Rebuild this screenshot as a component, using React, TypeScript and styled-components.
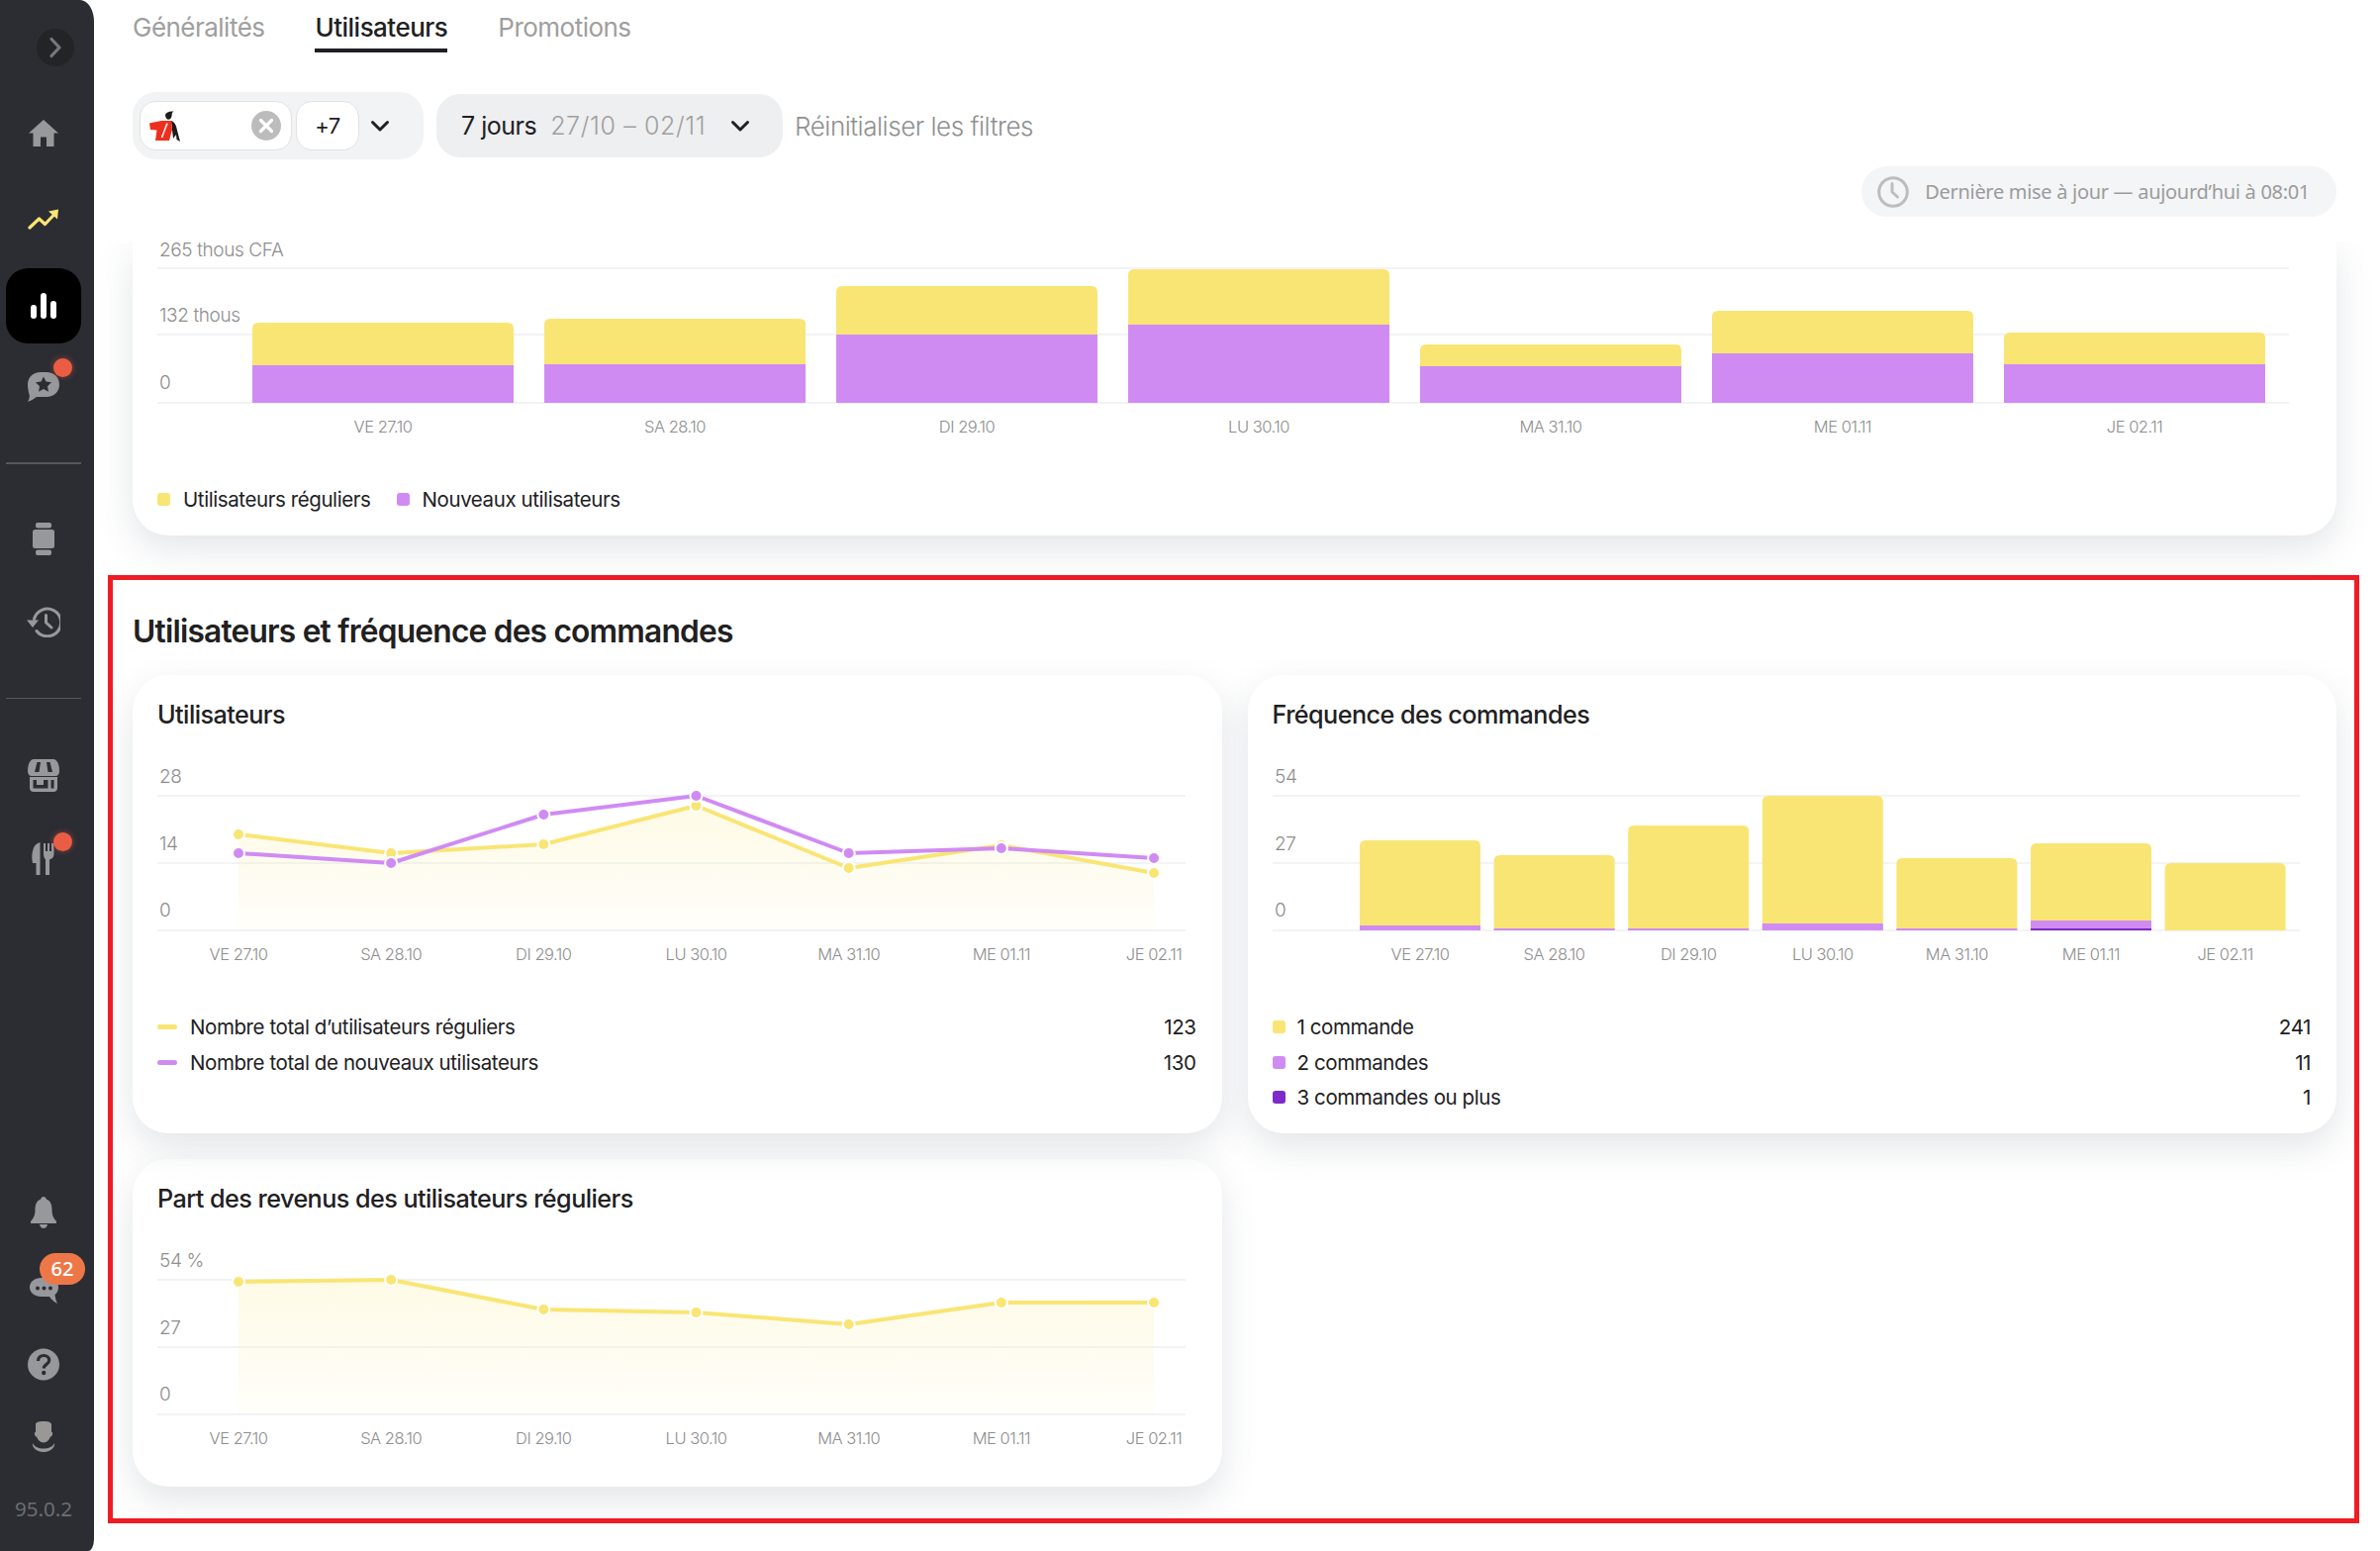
import styled, { createGlobalStyle } from "styled-components";

const GlobalStyle = createGlobalStyle`
  html, body {
    margin: 0;
    padding: 0;
    background: #fff;
  }
  body {
    font-family: "Inter", "Liberation Sans", sans-serif;
    color: #21201f;
  }
  * {
    box-sizing: border-box;
  }
`;

const YELLOW = "#f9e574";
const PURPLE = "#d08bf3";
const DARK_PURPLE = "#7e2ac8";
const ICON = "#97989b";
const SIDE = "#2b2d33";

const days = ["VE 27.10", "SA 28.10", "DI 29.10", "LU 30.10", "MA 31.10", "ME 01.11", "JE 02.11"];

const Page = styled.div`
  display: flex;
  height: 1567px;
  overflow: hidden;
  background: #fff;
`;

const Sidebar = styled.aside`
  flex: 0 0 95px;
  display: flex;
  flex-direction: column;
  background: ${SIDE};
  border-top-right-radius: 14px 22px;
  border-bottom-right-radius: 6px 12px;
`;

const Toggle = styled.div`
  width: 38px;
  height: 38px;
  margin: 29px 0 24px 37px;
  border-radius: 50%;
  background: #222428;
  display: flex;
  align-items: center;
  justify-content: center;
`;

const NavSlot = styled.div<{ $h?: number }>`
  position: relative;
  width: 88px;
  height: ${(p) => p.$h ?? 84}px;
  display: flex;
  align-items: center;
  justify-content: center;
`;

const ActiveItem = styled.div`
  width: 76px;
  height: 76px;
  border-radius: 22px;
  background: #000;
  display: flex;
  align-items: center;
  justify-content: center;
`;

const NavDivider = styled.div<{ $thick?: boolean }>`
  width: 76px;
  height: ${(p) => (p.$thick ? 2 : 1)}px;
  margin: ${(p) => (p.$thick ? "37px 0 33px 6px" : "35px 0 35px 6px")};
  background: #55575c;
  flex: none;
`;

const NavDot = styled.span<{ $top: number }>`
  position: absolute;
  left: 54px;
  top: ${(p) => p.$top}px;
  width: 19px;
  height: 19px;
  border-radius: 50%;
  background: #ea5d44;
  box-shadow: 0 0 6px rgba(234, 93, 68, 0.5);
`;

const CountBadge = styled.span`
  position: absolute;
  left: 40px;
  top: -1px;
  width: 46px;
  height: 32px;
  border-radius: 16px;
  background: #ee7748;
  color: #fff;
  font: 500 20px/32px "Noto Sans", sans-serif;
  text-align: center;
`;

const BottomNav = styled.div`
  margin-top: auto;
  display: flex;
  flex-direction: column;
`;

const Version = styled.div`
  width: 88px;
  margin-top: 24px;
  padding-bottom: 31px;
  font: 400 20.5px/24px "Noto Sans", sans-serif;
  color: #6c6e72;
  text-align: center;
`;

const Main = styled.main`
  flex: 1;
  min-width: 0;
  display: flex;
  flex-direction: column;
`;

const Header = styled.header`
  position: relative;
  z-index: 2;
  flex: none;
  height: 244px;
  padding: 12px 44px 0 39px;
  background: #fff;
  display: flex;
  flex-direction: column;
`;

const Tabs = styled.nav`
  display: flex;
  gap: 51px;
`;

const Tab = styled.div<{ $active?: boolean }>`
  font-size: 26px;
  line-height: 32px;
  font-weight: ${(p) => (p.$active ? 500 : 400)};
  letter-spacing: -0.02em;
  padding-bottom: 5px;
  border-bottom: 4px solid ${(p) => (p.$active ? "#1f2023" : "transparent")};
  color: ${(p) => (p.$active ? "#21201f" : "#9e9e9e")};
`;

const Filters = styled.div`
  margin-top: 40px;
  display: flex;
  align-items: center;
`;

const PlaceBox = styled.div`
  width: 294px;
  height: 68px;
  padding: 9px 0 9px 7px;
  border-radius: 24px;
  background: #f2f3f5;
  display: flex;
  align-items: center;
  gap: 4px;
`;

const Chip = styled.div<{ $w: number }>`
  width: ${(p) => p.$w}px;
  height: 50px;
  border: 1px solid #e2e2e2;
  border-radius: 16px;
  background: #fff;
  display: flex;
  align-items: center;
  justify-content: space-between;
  padding: 0 10px 0 9px;
`;

const MoreChip = styled(Chip)`
  justify-content: center;
  padding: 0;
  font-size: 22px;
  letter-spacing: -0.02em;
`;

const ChevronSlot = styled.div`
  margin-left: 7px;
  display: flex;
`;

const DateBox = styled.div`
  width: 350px;
  height: 64px;
  margin: 0 12px 0 13px;
  padding-left: 25px;
  border-radius: 24px;
  background: #eeeff1;
  display: flex;
  align-items: center;
  font-size: 25px;
  letter-spacing: -0.02em;
`;

const DateRange = styled.span`
  margin: 0 25px 0 14px;
  color: #a0a0a0;
  font-weight: 300;
  letter-spacing: 0.025em;
`;

const ResetLink = styled.div`
  font-size: 26px;
  letter-spacing: -0.018em;
  font-weight: 300;
  color: #8f8f8f;
`;

const UpdatedPill = styled.div`
  align-self: flex-end;
  margin-top: 7px;
  height: 51px;
  padding: 0 27px 0 16px;
  border-radius: 26px;
  background: #f4f5f7;
  display: flex;
  align-items: center;
  gap: 16px;
  font: 400 20px "Noto Sans", sans-serif;
  letter-spacing: -0.015em;
  color: #9b9b9b;
`;

const Content = styled.div`
  flex: 1;
  display: flex;
  flex-direction: column;
`;

const Card = styled.section<{ $raised?: boolean }>`
  position: relative;
  z-index: ${(p) => (p.$raised ? 1 : 0)};
  background: #fff;
  border-radius: 36px;
  box-shadow: 0 14px 36px rgba(70, 80, 100, 0.15);
`;

const TopCard = styled(Card)`
  margin: 0 44px 0 39px;
  padding: 0 48px 21px 25px;
  border-top-left-radius: 0;
  border-top-right-radius: 0;
`;

const FrameSection = styled.section`
  margin: 40px 21px 0 14px;
  padding: 32px 18px 32px 20px;
  border: 5px solid #ee1c25;
  overflow: hidden;
`;

const SectionTitle = styled.h2`
  margin: 0 0 24px;
  font-size: 31.7px;
  line-height: 40px;
  font-weight: 600;
  letter-spacing: -0.025em;
`;

const CardsGrid = styled.div`
  display: grid;
  grid-template-columns: 1fr 1fr;
  gap: 26px;
`;

const ChartCard = styled(Card)<{ $bottom: number }>`
  padding: 24px 26px ${(p) => p.$bottom}px 25px;
`;

const CardTitle = styled.h3`
  margin: 0 0 32px;
  font-size: 25.2px;
  line-height: 32px;
  font-weight: 500;
  letter-spacing: -0.022em;
`;

const ChartCanvas = styled.svg`
  display: block;
  overflow: visible;
`;

const AxisText = styled.text`
  font-size: 19px;
  font-weight: 300;
  letter-spacing: -0.02em;
  fill: #8e8e8e;
  dominant-baseline: central;
`;

const DayText = styled.text`
  font-size: 16.5px;
  font-weight: 300;
  letter-spacing: -0.03em;
  fill: #8e8e8e;
  text-anchor: middle;
  dominant-baseline: central;
`;

const Legend = styled.div`
  margin-top: 45px;
  display: flex;
  flex-direction: column;
`;

const LegendRow = styled.div`
  height: 35.5px;
  display: flex;
  align-items: center;
  font-size: 20.5px;
  font-weight: 400;
  letter-spacing: -0.02em;
`;

const LineSwatch = styled.span<{ $color: string }>`
  flex: none;
  width: 20px;
  height: 5px;
  margin-right: 13px;
  border-radius: 3px;
  background: ${(p) => p.$color};
`;

const SquareSwatch = styled.span<{ $color: string }>`
  flex: none;
  width: 13px;
  height: 13px;
  margin-right: 12px;
  border-radius: 3px;
  background: ${(p) => p.$color};
`;

const LegendValue = styled.span`
  margin-left: auto;
`;

const InlineLegend = styled.div`
  margin-top: 44px;
  height: 32px;
  display: flex;
  align-items: center;
  font-size: 20.5px;
  letter-spacing: -0.02em;
`;

const InlineItem = styled.div`
  display: flex;
  align-items: center;
  margin-right: 26px;
`;

const ItemSwatch = styled(SquareSwatch)`
  margin-right: 13px;
`;

type BarColumn = { top: number; color: string }[];

function Grid({ width, lines, ticks }: { width: number; lines: number[]; ticks: { y: number; label: string }[] }) {
  return (
    <>
      {lines.map((y) => (
        <rect key={y} x={0} y={y - 1} width={width} height={2} fill="#f2f3f5" />
      ))}
      {ticks.map((t) => (
        <AxisText key={t.label} x={2} y={t.y}>
          {t.label}
        </AxisText>
      ))}
    </>
  );
}

function BarChart(props: {
  width: number;
  height: number;
  lines: number[];
  ticks: { y: number; label: string }[];
  startX: number;
  step: number;
  barWidth: number;
  dayY: number;
  columns: BarColumn[];
}) {
  const { width, height, lines, ticks, startX, step, barWidth, dayY, columns } = props;
  const base = lines[2];
  return (
    <ChartCanvas width={width} height={height} viewBox={`0 0 ${width} ${height}`}>
      <Grid width={width} lines={lines} ticks={ticks} />
      {columns.map((col, i) => {
        const x = startX + i * step;
        return (
          <g key={i}>
            {col.map((seg, j) =>
              j === 0 ? (
                <path
                  key={j}
                  fill={seg.color}
                  d={`M${x} ${base}V${seg.top + 6}Q${x} ${seg.top} ${x + 6} ${seg.top}H${x + barWidth - 6}Q${x + barWidth} ${seg.top} ${x + barWidth} ${seg.top + 6}V${base}Z`}
                />
              ) : (
                <rect key={j} x={x} y={seg.top} width={barWidth} height={base - seg.top} fill={seg.color} />
              )
            )}
            <DayText x={x + barWidth / 2} y={dayY}>
              {days[i]}
            </DayText>
          </g>
        );
      })}
    </ChartCanvas>
  );
}

function LineChart(props: {
  id: string;
  ticks: { y: number; label: string }[];
  area: number[];
  series: { color: string; points: number[] }[];
}) {
  const { id, ticks, area, series } = props;
  const width = 1040;
  const lines = [34, 102, 170];
  const xAt = (i: number) => 82 + i * 154.17;
  const areaPath = `M${xAt(0)} 170` + area.map((y, i) => `L${xAt(i)} ${y}`).join("") + `L${xAt(6)} 170Z`;
  return (
    <ChartCanvas width={width} height={205} viewBox={`0 0 ${width} 205`}>
      <defs>
        <linearGradient id={id} x1="0" y1="0" x2="0" y2="1">
          <stop offset="0" stopColor={YELLOW} stopOpacity={0.18} />
          <stop offset="1" stopColor={YELLOW} stopOpacity={0.04} />
        </linearGradient>
      </defs>
      <Grid width={width - 1} lines={lines} ticks={ticks} />
      <path d={areaPath} fill={`url(#${id})`} />
      {series.map((s) => (
        <g key={s.color}>
          <polyline
            points={s.points.map((y, i) => `${xAt(i)},${y}`).join(" ")}
            fill="none"
            stroke={s.color}
            strokeWidth={4}
            strokeLinejoin="round"
          />
          {s.points.map((y, i) => (
            <circle key={i} cx={xAt(i)} cy={y} r={6} fill={s.color} stroke="#fff" strokeWidth={2} />
          ))}
        </g>
      ))}
      {days.map((d, i) => (
        <DayText key={d} x={xAt(i)} y={194}>
          {d}
        </DayText>
      ))}
    </ChartCanvas>
  );
}

const ChevronDown = () => (
  <svg width="20" height="13" viewBox="0 0 20 13">
    <path d="M2.5 2.5 10 10l7.5-7.5" fill="none" stroke="#21201f" strokeWidth="3" strokeLinecap="round" strokeLinejoin="round" />
  </svg>
);

const PlaceLogo = () => (
  <svg width="32" height="31" viewBox="0 0 32 31">
    <path d="M16 4c1-2.500 4-4 8.500-3.500C23 1.500 22.700 2.500 22.700 4.300c0 2.600-1.700 4.500-3.500 4.500S16 6.500 16 4Z" fill="#1d1c1c" />
    <path d="M22 10c3.500 1 5 4.500 6 9.500l3 11.500-3.500-2-.5-5-3 4Z" fill="#1d1c1c" />
    <path d="M0 12.500 12 10h10l1 9-3 11H6l1.500-10.500L1 19Z" fill="#ee2f1f" />
    <path d="M18 12.500 12.500 27" fill="none" stroke="#fff" strokeWidth="1.500" />
  </svg>
);

const ClearIcon = () => (
  <svg width="30" height="30" viewBox="0 0 30 30">
    <circle cx="15" cy="15" r="15" fill="#bcbcbc" />
    <path d="m9.500 9.500 11 11m0-11-11 11" stroke="#fff" strokeWidth="3.200" strokeLinecap="round" />
  </svg>
);

const ClockIcon = () => (
  <svg width="32" height="32" viewBox="0 0 32 32">
    <circle cx="16" cy="16" r="14.300" fill="none" stroke="#bdbdbd" strokeWidth="3" />
    <path d="M15 7.500V16l5.500 5" fill="none" stroke="#bdbdbd" strokeWidth="3" strokeLinecap="round" strokeLinejoin="round" />
  </svg>
);

const ToggleArrow = () => (
  <svg width="14" height="22" viewBox="0 0 14 22">
    <path d="m3 2.500 8 8.500-8 8.500" fill="none" stroke="#77787b" strokeWidth="3.200" strokeLinecap="round" strokeLinejoin="round" />
  </svg>
);

const HomeIcon = () => (
  <svg width="30" height="27" viewBox="0 0 30 27">
    <path d="M15 0 30 13.500h-4.500V27H18V17.500h-6V27H4.500V13.500H0Z" fill={ICON} />
  </svg>
);

const TrendIcon = () => (
  <svg width="32" height="21" viewBox="0 0 32 21">
    <path d="m2 19 9.500-9 6 5.500L27 5.500" fill="none" stroke={YELLOW} strokeWidth="3.200" strokeLinecap="round" strokeLinejoin="round" />
    <path d="M21 2.500 31 .5 30 10.500Z" fill={YELLOW} />
  </svg>
);

const BarsIcon = () => (
  <svg width="26" height="26" viewBox="0 0 26 26">
    <rect x="0" y="12" width="6" height="14" rx="3" fill="#fff" />
    <rect x="10" y="0" width="6" height="26" rx="3" fill="#fff" />
    <rect x="20" y="8" width="6" height="18" rx="3" fill="#fff" />
  </svg>
);

const ReviewIcon = () => (
  <svg width="32" height="30" viewBox="0 0 32 30">
    <path d="M13 0h6c7.500 0 13 5 13 12.500S26.500 25 19 25H9C6 27 3 29 0 30c1.500-2.500 2-5 1.800-7C.7 20.800 0 15 0 12.500 0 5 5.500 0 13 0Z" fill={ICON} />
    <path d="m16 4.500 2.500 5 5.500.8-4 3.900 1 5.500L16 17.100l-5 2.600 1-5.500-4-3.900 5.500-.8Z" fill={SIDE} />
  </svg>
);

const WatchIcon = () => (
  <svg width="22" height="33" viewBox="0 0 22 33">
    <rect x="3" y="0" width="16" height="5.500" rx="2" fill={ICON} />
    <rect x="0" y="7" width="22" height="19" rx="2.500" fill={ICON} />
    <rect x="3" y="27.500" width="16" height="5.500" rx="2" fill={ICON} />
  </svg>
);

const HistoryIcon = () => (
  <svg width="34" height="31" viewBox="0 0 34 31">
    <path d="M7.500 12.500A13.800 13.800 0 1 1 10 24.500" fill="none" stroke={ICON} strokeWidth="3" strokeLinecap="round" />
    <path d="M0 13.500h12L6 21Z" fill={ICON} />
    <path d="M19.500 8.500V16l5.500 5" fill="none" stroke={ICON} strokeWidth="3" strokeLinecap="round" strokeLinejoin="round" />
  </svg>
);

const StoreIcon = () => (
  <svg width="32" height="33" viewBox="0 0 32 33">
    <path d="M6 0h20c3 0 6 4 6 12 0 3-1.500 5-4 5H4c-2.500 0-4-2-4-5C0 4 3 0 6 0Z" fill={ICON} />
    <path d="M9.500 3h3.500l-1.500 10H7ZM19 3h3.500L25 13h-4.500Z" fill={SIDE} />
    <path d="M2 18h28v11c0 2.500-1.500 4-4 4H6c-2.500 0-4-1.500-4-4Z" fill={ICON} />
    <path d="M5.500 21h15v8.500h-15ZM23.500 21h3v8.500h-3Z" fill={SIDE} />
    <rect x="9" y="20" width="7" height="6" fill={ICON} />
  </svg>
);

const CutleryIcon = () => (
  <svg width="24" height="33" viewBox="0 0 24 33">
    <path d="M8.500 0v33H4.500V21H1C0 16 0 12 1.500 7 2.500 3.500 5 1 8.500 0Z" fill={ICON} />
    <path d="M12 1h2v8h2V1h2v8h2V1h2.500v11c0 3-2 5-4.500 5.500V33h-4V17.500C13.500 17 12 15 12 12Z" fill={ICON} />
  </svg>
);

const BellIcon = () => (
  <svg width="26" height="32" viewBox="0 0 26 32">
    <path d="M13 0c1.500 0 2.500 1 2.800 2.500C20 4 21.500 8 21.500 13c0 5 1 8 4.500 12 .5 1 0 2-1 2H1c-1 0-1.500-1-1-2 3.500-4 4.500-7 4.500-12 0-5 1.500-9 5.700-10.500C10.500 1 11.500 0 13 0Z" fill={ICON} />
    <path d="M9 28h8c-.5 2.500-2 4-4 4s-3.500-1.500-4-4Z" fill={ICON} />
  </svg>
);

const ChatIcon = () => (
  <svg width="29" height="26" viewBox="0 0 29 26">
    <path d="M12 0h5c7 0 12 4 12 9.500 0 3-1 5.500-3.500 7.500.3 3 1 6 2.500 9-3-1.500-6-4-8-7h-8C5 19 0 15 0 9.500S5 0 12 0Z" fill={ICON} />
    <circle cx="8" cy="10.500" r="2" fill={SIDE} />
    <circle cx="14.500" cy="10.500" r="2" fill={SIDE} />
    <circle cx="21" cy="10.500" r="2" fill={SIDE} />
  </svg>
);

const HelpIcon = () => (
  <svg width="32" height="33" viewBox="0 0 32 33">
    <circle cx="16" cy="16.500" r="16" fill={ICON} />
    <path d="M10.500 13c0-3.500 2.500-5.500 5.700-5.500 3.300 0 5.500 2 5.500 4.700 0 4.300-5.500 4-5.500 8.300" fill="none" stroke={SIDE} strokeWidth="3.200" />
    <circle cx="16.200" cy="25" r="2.200" fill={SIDE} />
  </svg>
);

const ProfileIcon = () => (
  <svg width="24" height="31" viewBox="0 0 24 31">
    <path d="M4 3c0-1.500 2-3 8-3s8 1.500 8 3v8c1 0 1.500.5 1 2-.5 2-1 2.500-2 2.500-1 3-4 6-7 6s-6-3-7-6c-1 0-1.500-.5-2-2.500-.5-1.500 0-2 1-2Z" fill="#9a9895" />
    <path d="M1 22c2 4 6 5.500 11 5.500S21 26 23 22c1 3-3 9-11 9S0 25 1 22Z" fill="#9a9895" />
  </svg>
);

export default function App() {
  return (
    <>
      <GlobalStyle />
      <Page>
        <Sidebar>
          <Toggle>
            <ToggleArrow />
          </Toggle>
          <NavSlot $h={87}>
            <HomeIcon />
          </NavSlot>
          <NavSlot $h={87}>
            <TrendIcon />
          </NavSlot>
          <NavSlot $h={87}>
            <ActiveItem>
              <BarsIcon />
            </ActiveItem>
          </NavSlot>
          <NavSlot $h={78}>
            <ReviewIcon />
            <NavDot $top={10} />
          </NavSlot>
          <NavDivider $thick />
          <NavSlot>
            <WatchIcon />
          </NavSlot>
          <NavSlot>
            <HistoryIcon />
          </NavSlot>
          <NavDivider />
          <NavSlot>
            <StoreIcon />
          </NavSlot>
          <NavSlot>
            <CutleryIcon />
            <NavDot $top={16} />
          </NavSlot>
          <BottomNav>
            <NavSlot $h={85}>
              <BellIcon />
            </NavSlot>
            <NavSlot $h={74}>
              <ChatIcon />
              <CountBadge>62</CountBadge>
            </NavSlot>
            <NavSlot $h={74}>
              <HelpIcon />
            </NavSlot>
            <NavSlot $h={73}>
              <ProfileIcon />
            </NavSlot>
            <Version>95.0.2</Version>
          </BottomNav>
        </Sidebar>
        <Main>
          <Header>
            <Tabs>
              <Tab>Généralités</Tab>
              <Tab $active>Utilisateurs</Tab>
              <Tab>Promotions</Tab>
            </Tabs>
            <Filters>
              <PlaceBox>
                <Chip $w={154}>
                  <PlaceLogo />
                  <ClearIcon />
                </Chip>
                <MoreChip $w={64}>+7</MoreChip>
                <ChevronSlot>
                  <ChevronDown />
                </ChevronSlot>
              </PlaceBox>
              <DateBox>
                7 jours
                <DateRange>27/10 – 02/11</DateRange>
                <ChevronDown />
              </DateBox>
              <ResetLink>Réinitialiser les filtres</ResetLink>
            </Filters>
            <UpdatedPill>
              <ClockIcon />
              Dernière mise à jour — aujourd’hui à 08:01
            </UpdatedPill>
          </Header>
          <Content>
            <TopCard>
              <BarChart
                width={2154}
                height={200}
                lines={[27, 94, 163]}
                ticks={[
                  { y: 8, label: "265 thous CFA" },
                  { y: 74, label: "132 thous" },
                  { y: 142, label: "0" },
                ]}
                startX={96}
                step={295}
                barWidth={264}
                dayY={187}
                columns={[
                  [{ top: 82, color: YELLOW }, { top: 125, color: PURPLE }],
                  [{ top: 78, color: YELLOW }, { top: 124, color: PURPLE }],
                  [{ top: 45, color: YELLOW }, { top: 94, color: PURPLE }],
                  [{ top: 28, color: YELLOW }, { top: 84, color: PURPLE }],
                  [{ top: 104, color: YELLOW }, { top: 126, color: PURPLE }],
                  [{ top: 70, color: YELLOW }, { top: 113, color: PURPLE }],
                  [{ top: 92, color: YELLOW }, { top: 124, color: PURPLE }],
                ]}
              />
              <InlineLegend>
                <InlineItem>
                  <ItemSwatch $color={YELLOW} />
                  Utilisateurs réguliers
                </InlineItem>
                <InlineItem>
                  <ItemSwatch $color={PURPLE} />
                  Nouveaux utilisateurs
                </InlineItem>
              </InlineLegend>
            </TopCard>
            <FrameSection>
              <SectionTitle>Utilisateurs et fréquence des commandes</SectionTitle>
              <CardsGrid>
                <ChartCard $raised $bottom={18}>
                  <CardTitle>Utilisateurs</CardTitle>
                  <LineChart
                    id="users-area"
                    ticks={[
                      { y: 14, label: "28" },
                      { y: 82, label: "14" },
                      { y: 149, label: "0" },
                    ]}
                    area={[73, 92, 83, 44, 107, 84, 112]}
                    series={[
                      { color: YELLOW, points: [73, 92, 83, 44, 107, 84, 112] },
                      { color: PURPLE, points: [92, 102, 53, 34, 92, 87, 97] },
                    ]}
                  />
                  <Legend>
                    <LegendRow>
                      <LineSwatch $color={YELLOW} />
                      Nombre total d’utilisateurs réguliers
                      <LegendValue>123</LegendValue>
                    </LegendRow>
                    <LegendRow>
                      <LineSwatch $color={PURPLE} />
                      Nombre total de nouveaux utilisateurs
                      <LegendValue>130</LegendValue>
                    </LegendRow>
                  </Legend>
                </ChartCard>
                <ChartCard $raised $bottom={18}>
                  <CardTitle>Fréquence des commandes</CardTitle>
                  <BarChart
                    width={1038}
                    height={205}
                    lines={[34, 102, 170]}
                    ticks={[
                      { y: 14, label: "54" },
                      { y: 82, label: "27" },
                      { y: 149, label: "0" },
                    ]}
                    startX={88}
                    step={135.6}
                    barWidth={122}
                    dayY={194}
                    columns={[
                      [{ top: 79, color: YELLOW }, { top: 165, color: PURPLE }],
                      [{ top: 94, color: YELLOW }, { top: 168, color: PURPLE }],
                      [{ top: 64, color: YELLOW }, { top: 168, color: PURPLE }],
                      [{ top: 34, color: YELLOW }, { top: 163, color: PURPLE }],
                      [{ top: 97, color: YELLOW }, { top: 168, color: PURPLE }],
                      [{ top: 82, color: YELLOW }, { top: 160, color: PURPLE }, { top: 168, color: DARK_PURPLE }],
                      [{ top: 102, color: YELLOW }],
                    ]}
                  />
                  <Legend>
                    <LegendRow>
                      <SquareSwatch $color={YELLOW} />
                      1 commande
                      <LegendValue>241</LegendValue>
                    </LegendRow>
                    <LegendRow>
                      <SquareSwatch $color={PURPLE} />
                      2 commandes
                      <LegendValue>11</LegendValue>
                    </LegendRow>
                    <LegendRow>
                      <SquareSwatch $color={DARK_PURPLE} />
                      3 commandes ou plus
                      <LegendValue>1</LegendValue>
                    </LegendRow>
                  </Legend>
                </ChartCard>
                <ChartCard $bottom={38}>
                  <CardTitle>Part des revenus des utilisateurs réguliers</CardTitle>
                  <LineChart
                    id="share-area"
                    ticks={[
                      { y: 14, label: "54 %" },
                      { y: 82, label: "27" },
                      { y: 149, label: "0" },
                    ]}
                    area={[36, 34, 64, 67, 79, 57, 57]}
                    series={[{ color: YELLOW, points: [36, 34, 64, 67, 79, 57, 57] }]}
                  />
                </ChartCard>
              </CardsGrid>
            </FrameSection>
          </Content>
        </Main>
      </Page>
    </>
  );
}
